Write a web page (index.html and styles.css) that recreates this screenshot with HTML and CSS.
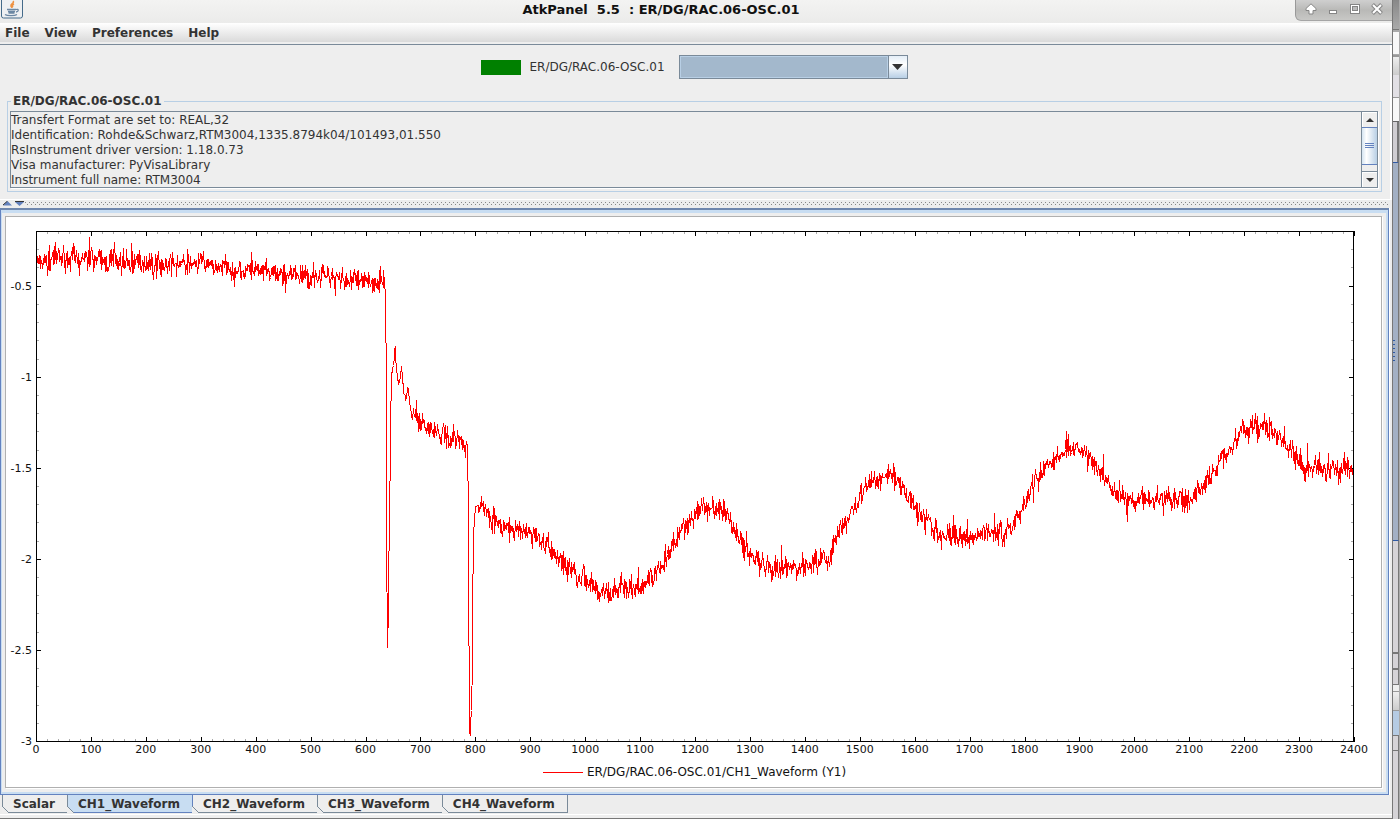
FILE: index.html
```html
<!DOCTYPE html>
<html lang="en">
<head>
<meta charset="utf-8">
<title>AtkPanel</title>
<link rel="stylesheet" href="styles.css">
</head>
<body>

<div class="window">
  <header class="titlebar">
    <svg class="java" viewBox="0 0 22 19" aria-hidden="true">
      <rect x="0.5" y="-4" width="21" height="22" rx="2" fill="#eef0f2" stroke="#456b8a"/>
      <path d="M12 1c2 2-3 3-2 5 0 1 1 1 1 2M13 4c-2 1-2 2-1 3" fill="none" stroke="#ee9243" stroke-width="1.6"/>
      <path d="M6 9.500h9M7 11.500h7M7.500 13h6M15 9.500c3-1 3 2 0 2.500M4 14.500c2 1.500 10 1.500 12 0" fill="none" stroke="#6b87a3" stroke-width="1.300"/>
    </svg>
    <h1>AtkPanel&nbsp; 5.5&nbsp; : ER/DG/RAC.06-OSC.01</h1>
    <div class="controls">
      <button aria-label="Shade"><svg viewBox="0 0 12 12"><path d="M6 .8L1 5.500v2h3v3.500h4V7.500h3v-2z" fill="#fff" stroke="#858585"/></svg></button>
      <button aria-label="Minimize"><svg viewBox="0 0 12 12"><rect x="2.500" y="7.500" width="7" height="3" fill="#fff" stroke="#858585"/></svg></button>
      <button aria-label="Maximize"><svg viewBox="0 0 12 12"><rect x="1.500" y="1.500" width="9" height="9" fill="#fff" stroke="#858585"/><rect x="3.500" y="3.500" width="5" height="4" fill="#bbb" stroke="#858585"/></svg></button>
      <button aria-label="Close"><svg viewBox="0 0 12 12"><path d="M1.500 1.500l9 9M10.500 1.500l-9 9" stroke="#858585" stroke-width="4"/><path d="M2 2l8 8M10 2l-8 8" stroke="#fff" stroke-width="2"/></svg></button>
    </div>
  </header>

  <nav class="menubar">
    <button>File</button>
    <button>View</button>
    <button>Preferences</button>
    <button>Help</button>
  </nav>

  <section class="top">
    <div class="device">
      <span class="state"></span>
      <label for="cmd">ER/DG/RAC.06-OSC.01</label>
      <div class="combo">
        <select id="cmd"><option></option></select>
        <span class="drop"><svg viewBox="0 0 11 6"><path d="M0 0h11L5.500 6z" fill="#333"/></svg></span>
      </div>
    </div>

    <fieldset class="status">
      <legend>ER/DG/RAC.06-OSC.01</legend>
      <div class="scrollpane">
        <textarea readonly rows="5" aria-label="Device status">Transfert Format are set to: REAL,32
Identification: Rohde&amp;Schwarz,RTM3004,1335.8794k04/101493,01.550
RsInstrument driver version: 1.18.0.73
Visa manufacturer: PyVisaLibrary
Instrument full name: RTM3004</textarea>
        <div class="scrollbar">
          <button aria-label="Scroll up"><svg viewBox="0 0 8 4"><path d="M0 4h8L4 0z" fill="#333"/></svg></button>
          <div class="track"><div class="thumb"></div></div>
          <button aria-label="Scroll down"><svg viewBox="0 0 8 4"><path d="M0 0h8L4 4z" fill="#333"/></svg></button>
        </div>
      </div>
    </fieldset>
  </section>

  <div class="divider">
    <svg viewBox="0 0 22 5" aria-hidden="true">
      <path d="M0 4.500h9L4.500 0zM12 1h9l-4.500 4z" fill="#6382bf"/>
      <path d="M4.500 0L0 4M12 .5h9" stroke="#333" fill="none"/>
    </svg>
    <div class="dots"></div>
  </div>

  <main class="pane">
    <div class="chart">
      <svg id="plot" role="img" aria-label="CH1_Waveform"></svg>
      <div class="key"><span class="line"></span>ER/DG/RAC.06-OSC.01/CH1_Waveform (Y1)</div>
    </div>
  </main>

  <div class="tabs" role="tablist">
    <button role="tab" aria-selected="false">Scalar</button>
    <button role="tab" aria-selected="true">CH1_Waveform</button>
    <button role="tab" aria-selected="false">CH2_Waveform</button>
    <button role="tab" aria-selected="false">CH3_Waveform</button>
    <button role="tab" aria-selected="false">CH4_Waveform</button>
  </div>
</div>

<div class="behind">
  <div class="b-title"></div>
  <div class="b-menu"></div>
  <div class="b-tool"></div>
  <div class="b-white"></div>
  <div class="b-head"></div>
  <div class="b-thumb"><div class="b-grip"></div></div>
  <div class="b-track"></div>
  <div class="b-button"></div>
  <div class="b-button"></div>
  <div class="b-gap"></div>
  <div class="b-foot"></div>
  <div class="b-blue"></div>
  <div class="b-button"></div>
  <div class="b-rest"></div>
</div>

<script src="plot.js"></script>
</body>
</html>
```
FILE: styles.css
```css
* {
  box-sizing: border-box;
}
body {
  margin: 0;
  display: flex;
  height: 100vh;
  overflow: hidden;
  background: #ededed;
  color: #333;
  font: 12px/15px "DejaVu Sans", sans-serif;
}
button, select, textarea {
  margin: 0;
  padding: 0;
  border: 0;
  border-radius: 0;
  background: none;
  color: inherit;
  font: inherit;
}
svg {
  display: block;
}

.window {
  flex: 1;
  min-width: 0;
  display: flex;
  flex-direction: column;
  border-right: 1px solid #777;
  border-bottom: 1px solid #777;
}

/* title bar */
.titlebar {
  display: flex;
  height: 23px;
  background: linear-gradient(#f3f3f2, #ebebea);
}
.java {
  width: 22px;
  height: 19px;
  margin-left: 1px;
}
.titlebar h1 {
  flex: 1;
  margin: 2px 0 0;
  padding-left: 4px;
  text-align: center;
  color: #111;
  font-size: 13px;
  line-height: 15px;
}
.controls {
  display: flex;
  gap: 10px;
  align-items: center;
  height: 21px;
  padding: 0 9px 2px;
  border-left: 1px solid #999;
  border-bottom: 1px solid #a5a5a5;
  border-bottom-left-radius: 6px;
  background: linear-gradient(#cfcfcf, #b9b9b7 50%, #c8c8c6);
}
.controls svg {
  width: 12px;
  height: 12px;
}

.menubar {
  display: flex;
  gap: 15px;
  height: 22px;
  padding: 1px 5px 2px;
  border-bottom: 1px solid #7a8a99;
  background: linear-gradient(#fff, #dadada 19px, #eee 19px);
  font-weight: bold;
}

/* device and status */
.top {
  padding: 10px 8px 7px 7px;
  border-right: 2px solid #fff;
  border-bottom: 1px solid #fff;
  background: #eee;
}
.device {
  display: flex;
  justify-content: center;
  align-items: center;
  gap: 8px;
  margin-bottom: 15px;
}
.state {
  width: 40px;
  height: 15px;
  background: #008000;
}
.combo {
  display: flex;
  width: 229px;
  height: 24px;
  margin-left: 6px;
  border: 1px solid #7a8a99;
}
.combo select {
  flex: 1;
  appearance: none;
  border: 1px solid #b8cfe5;
  background: #a3b8cc;
}
.combo .drop {
  display: grid;
  place-items: center;
  width: 19px;
  border-left: 1px solid #7a8a99;
  background: linear-gradient(#e4eef7, #fff 40%, #b8cfe5);
}
.drop svg {
  width: 11px;
  height: 6px;
}
.status {
  margin: 0;
  padding: 2px 3px 3px 2px;
  border: 1px solid #b8cfe5;
}
.status legend {
  margin-left: 1px;
  padding: 0 2px;
  font-weight: bold;
}
.scrollpane {
  display: flex;
  border: 1px solid #7a8a99;
  box-shadow: 1px 1px #fff;
}
.scrollpane textarea {
  flex: 1;
  display: block;
  height: 75px;
  padding-top: 1px;
  resize: none;
  overflow: hidden;
}
.scrollbar {
  display: flex;
  flex-direction: column;
  width: 16px;
  border-left: 1px solid #7a8a99;
}
.scrollbar button {
  display: grid;
  place-items: center;
  height: 15px;
  border: 1px solid #fff;
  border-width: 1px 0 0 1px;
}
.scrollbar svg {
  width: 8px;
  height: 4px;
}
.track {
  flex: 1;
  border-bottom: 1px solid #7a8a99;
}
.thumb {
  height: 38px;
  border: 1px solid #6382bf;
  border-width: 1px 0;
  background:
    linear-gradient(#6382bf, #6382bf) 3px 15px / 9px 1px no-repeat,
    linear-gradient(#6382bf, #6382bf) 3px 17px / 9px 1px no-repeat,
    linear-gradient(#6382bf, #6382bf) 3px 19px / 9px 1px no-repeat,
    linear-gradient(90deg, #d5e4f1, #fff 30%, #b8cfe5);
}

.divider {
  display: flex;
  height: 8px;
  padding: 1px 4px 0 3px;
}
.divider svg {
  width: 22px;
  height: 5px;
}
.dots {
  flex: 1;
  height: 4px;
  background:
    conic-gradient(from 270deg at 1px 1px, #888 90deg, transparent 90deg) 0 1px / 4px 4px,
    conic-gradient(from 270deg at 1px 1px, #888 90deg, transparent 90deg) 2px 3px / 4px 4px;
}

/* chart */
.pane {
  flex: 1;
  min-height: 0;
  display: flex;
  margin-right: 3px;
  padding: 6px 6px 6px 4px;
  border: 1px solid #6382bf;
  border-top: 2px solid #6f87ad;
  background: #eee;
  box-shadow: inset 0 3px #c8ddf2, inset -2px -2px #c8ddf2, inset 1px 0 #c8ddf2, 1px 0 #fff;
}
.chart {
  flex: 1;
  min-width: 0;
  display: flex;
  flex-direction: column;
  padding-bottom: 7px;
  border: 1px solid #b0b0b0;
  background: #fff;
  box-shadow: 1px 1px #fff;
}
#plot {
  flex: 1;
  width: 100%;
  min-height: 0;
  overflow: visible;
  color: #000;
  font-size: 11px;
}
#plot text {
  fill: #111;
}
.axis, .tick, .minor, .wave {
  fill: none;
  stroke: #000;
  shape-rendering: crispEdges;
}
.minor {
  stroke: #aaa;
}
.wave {
  stroke: #f00;
}
.key {
  display: flex;
  justify-content: center;
  align-items: center;
  gap: 4px;
  padding-left: 2px;
  color: #111;
}
.key .line {
  width: 40px;
  height: 1px;
  background: #f00;
}

/* tabs hang under the pane */
.tabs {
  display: flex;
  height: 23px;
  padding: 0 2px 5px;
  font-weight: bold;
  box-shadow: inset 0 -3px #eee, inset 0 -4px #fff;
}
.tabs button {
  position: relative;
  padding: 2px 12px 0 10px;
  border: 1px solid #7a8a99;
  border-top: 0;
  border-left: 0;
  background: #eee;
}
.tabs button:first-child {
  border-left: 1px solid #7a8a99;
}
.tabs button::before {
  content: "";
  position: absolute;
  left: -1px;
  bottom: -1px;
  width: 7px;
  height: 7px;
  background: linear-gradient(to top right, #eee 45%, #7a8a99 45% 55%, transparent 55%);
}
.tabs [aria-selected=true] {
  border-color: #6382bf;
  background: #c8ddf2;
}

/* edge of the window underneath */
.behind {
  display: flex;
  flex-direction: column;
  width: 7px;
  border-right: 1px solid #aaa;
  background: #d5d3d7;
}
.b-title {
  height: 30px;
  border-bottom: 1px solid #777;
  background: linear-gradient(#888, #aaa);
}
.b-menu {
  height: 25px;
  border: 1px solid #aaa;
  border-width: 2px 0 1px;
  background: #f8f8f8;
}
.b-tool {
  height: 43px;
  border: 1px solid #999;
  border-width: 2px 0 1px;
  background: linear-gradient(#eee, #ccc 45%, #e2e0e5 45%);
}
.b-white {
  height: 24px;
  border-bottom: 1px solid #666;
  background: #f8f8f8;
}
.b-head {
  height: 41px;
  border-right: 2px solid #777;
  border-bottom: 1px solid #2f5aa5;
  background: #d0ced2;
}
.b-thumb {
  display: flex;
  align-items: center;
  height: 378px;
  border-right: 1px solid #777;
  border-bottom: 1px solid #2f5aa5;
  background: #a3b0c4;
}
.b-grip {
  width: 2px;
  height: 24px;
  background: repeating-linear-gradient(#2f5aa5 0 1px, transparent 1px 4px);
}
.b-track {
  height: 112px;
  border-right: 1px solid #777;
  border-bottom: 1px solid #777;
}
.b-gap {
  height: 6px;
  background: #eee;
}
.b-foot {
  height: 20px;
  border: 1px solid #999;
  border-width: 1px 0;
  background: linear-gradient(#eee, #ccc);
}
.b-blue {
  height: 24px;
  background: #b5cbe3;
}
.b-button {
  height: 16px;
  border: 1px solid #777;
  border-left: 0;
}
.b-rest {
  flex: 1;
  border-right: 1px solid #777;
}
```
FILE: plot.js
```js
// mean level of the trace: [sample, value]
var LEVEL = [
  [0,-.36],[44,-.345],[98,-.345],[112,-.36],[208,-.375],[299,-.38],[372,-.41],
  [463,-.445],[499,-.445],[536,-.44],[599,-.485],[627,-.475],[634,-.465],
  [636,-.52],[638,-.9],[639,-1.86],[640,-2.476],[642,-2.03],[644,-1.71],
  [646,-1.175],[648,-.97],[650,-.95],[654,-.84],[656,-.95],[661,-1.04],
  [666,-.95],[669,-1.06],[673,-1.13],[677,-1.06],[683,-1.17],[696,-1.235],
  [718,-1.28],[736,-1.32],[763,-1.335],[781,-1.355],[786,-1.4],[788,-2.04],
  [789,-2.895],[791,-2.975],[793,-2.835],[795,-2.3],[796,-1.89],[798,-1.81],
  [800,-1.72],[805,-1.7],[815,-1.71],[827,-1.76],[845,-1.82],[863,-1.84],
  [909,-1.865],[927,-1.92],[954,-2.005],[982,-2.07],[1009,-2.15],[1027,-2.17],
  [1064,-2.165],[1091,-2.17],[1118,-2.115],[1137,-2.06],[1155,-1.95],
  [1173,-1.85],[1191,-1.78],[1209,-1.73],[1228,-1.71],[1246,-1.73],
  [1264,-1.775],[1282,-1.895],[1301,-1.985],[1319,-2.03],[1337,-2.065],
  [1364,-2.045],[1392,-2.04],[1419,-2.005],[1443,-2.0],[1455,-1.895],
  [1473,-1.795],[1501,-1.65],[1519,-1.58],[1537,-1.55],[1552,-1.54],
  [1570,-1.565],[1588,-1.65],[1610,-1.73],[1628,-1.815],[1646,-1.87],
  [1701,-1.875],[1728,-1.84],[1756,-1.85],[1777,-1.825],[1792,-1.745],
  [1810,-1.63],[1828,-1.53],[1856,-1.455],[1878,-1.39],[1892,-1.4],
  [1919,-1.445],[1938,-1.52],[1965,-1.63],[1983,-1.685],[2020,-1.66],
  [2065,-1.675],[2102,-1.66],[2129,-1.595],[2156,-1.465],[2180,-1.375],
  [2195,-1.295],[2220,-1.275],[2248,-1.29],[2275,-1.345],[2290,-1.43],
  [2308,-1.495],[2339,-1.495],[2400,-1.505]
];
var PEAKS = {
  97: -.235, 214: -.465, 361: -.5, 392: -.315, 545: -.55, 627: -.39,
  881: -1.79, 1026: -2.23, 1066: -2.07, 1215: -1.66, 1339: -2.12, 1552: -1.48,
  1648: -1.945, 1670: -1.76, 1763: -1.93, 1876: -1.3, 1987: -1.79,
  2092: -1.745, 2220: -1.2, 2237: -1.2, 2371: -1.59, 2382: -1.415
};
var X_MAX = 2400, Y_TOP = -0.2, Y_BOTTOM = -3;
var MARGIN = { left: 30, right: 27, top: 14, bottom: 24 };

var seed = 7;
function random() {
  seed = (seed * 16807) % 2147483647;
  return seed / 2147483647;
}

function samples() {
  var out = [], k = 0;
  for (var i = 0; i < X_MAX; i++) {
    while (k < LEVEL.length - 2 && LEVEL[k + 1][0] <= i) k++;
    var a = LEVEL[k], b = LEVEL[k + 1];
    var v = a[1] + (b[1] - a[1]) * (i - a[0]) / (b[0] - a[0]);
    var quiet = (i > 633 && i < 680) || (i > 784 && i < 806);
    var size = quiet ? 0.02 : random() < 0.08 ? 0.1 : 0.065;
    out.push(PEAKS[i] || v + (random() + random() + random() - 1.5) * size);
  }
  return out;
}

function draw() {
  seed = 7;
  var svg = document.getElementById('plot');
  svg.innerHTML = '';
  var box = svg.getBoundingClientRect();
  var left = MARGIN.left, right = Math.round(box.width) - MARGIN.right;
  var top = MARGIN.top, bottom = Math.round(box.height) - MARGIN.bottom;

  function px(x) { return left + x * (right - left) / X_MAX; }
  function py(y) { return top + (y - Y_TOP) * (bottom - top) / (Y_BOTTOM - Y_TOP); }
  function add(name, attrs, text) {
    var el = document.createElementNS('http://www.w3.org/2000/svg', name);
    for (var key in attrs) el.setAttribute(key, attrs[key]);
    if (text) el.textContent = text;
    svg.appendChild(el);
  }

  var major = '', minor = '';
  for (var i = 0; i <= 120; i++) {
    var x = Math.round(px(i * 20)) + 0.5;
    if (i % 5 == 0) {
      major += 'M' + x + ' ' + top + 'v5M' + x + ' ' + (bottom + 1) + 'v-5';
      add('text', { x: px(i * 20), y: bottom + 12, 'text-anchor': 'middle' }, String(i * 20));
    } else {
      minor += 'M' + x + ' ' + top + 'v3M' + x + ' ' + bottom + 'v-2';
    }
  }
  for (var j = 3; j <= 30; j++) {
    var y = Math.round(py(-j / 10)) + 0.5;
    if (j % 5 == 0) {
      major += 'M' + left + ' ' + y + 'h5M' + right + ' ' + y + 'h-5';
      add('text', { x: left - 4, y: y + 3, 'text-anchor': 'end' }, String(-j / 10));
    } else {
      minor += 'M' + left + ' ' + y + 'h3M' + right + ' ' + y + 'h-3';
    }
  }
  add('path', { 'class': 'minor', d: minor });
  add('path', { 'class': 'tick', d: major });

  var wave = samples().map(function (v, n) {
    return Math.floor(px(n)) + 0.5 + ' ' + (Math.round(py(v)) + 0.5);
  });
  add('path', { 'class': 'wave', d: 'M' + wave.join('L') });
  add('rect', { 'class': 'axis', x: left + 0.5, y: top + 0.5, width: right - left - 1, height: bottom - top });
}

draw();
window.addEventListener('resize', draw);
```
